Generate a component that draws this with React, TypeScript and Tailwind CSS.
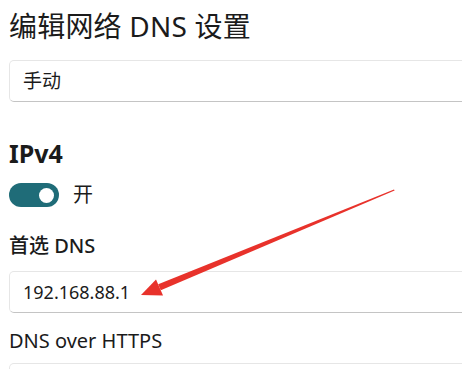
import React from 'react';

const font = { fontFamily: '"Noto Sans", "Noto Sans CJK SC", sans-serif' };

const Field = ({ children }: { children?: React.ReactNode }) => (
  <div className="w-[470px] h-[42px] bg-white rounded-[5px] border border-[#e6e6e6] border-b-[#c4c4c4] flex items-center pl-[13px] text-[18px] text-[#1b1b1b]">
    {children}
  </div>
);

const Arrow = () => (
  <svg className="absolute left-0 top-0 pointer-events-none" width="462" height="369" viewBox="0 0 462 369">
    <polygon points="394,189.5 394.6,190.6 160.8,290.2 158.2,284.2" fill="#e8322b" />
    <polygon points="141,295 156,279.5 163,295.5" fill="#e8322b" />
  </svg>
);

export default function App() {
  return (
    <div className="relative w-[462px] h-[369px] overflow-hidden bg-white text-[#1b1b1b]" style={font}>
      <div className="pl-[9px] pt-[8px]">
        <h1 className="text-[28px] leading-[36px] font-normal tracking-[0.2px]">编辑网络 DNS 设置</h1>
        <div className="mt-[16px]">
          <Field><span className="text-[19px]">手动</span></Field>
        </div>
        <div className="mt-[36px] text-[25px] leading-[30px] font-bold">IPv4</div>
        <div className="mt-[15px] flex items-center gap-[14px]">
          <div className="w-[50px] h-[24px] rounded-full bg-[#1f6c78] flex items-center justify-end pr-[5px]">
            <div className="w-[15px] h-[15px] rounded-full bg-white" />
          </div>
          <span className="text-[20px] leading-[24px]">开</span>
        </div>
        <div className="mt-[25px] text-[20px] leading-[28px] font-medium">首选 DNS</div>
        <div className="mt-[11px]">
          <Field>192.168.88.1</Field>
        </div>
        <div className="mt-[14px] text-[20px] leading-[28px]">DNS over HTTPS</div>
        <div className="mt-[8px]">
          <Field />
        </div>
      </div>
      <Arrow />
    </div>
  );
}
